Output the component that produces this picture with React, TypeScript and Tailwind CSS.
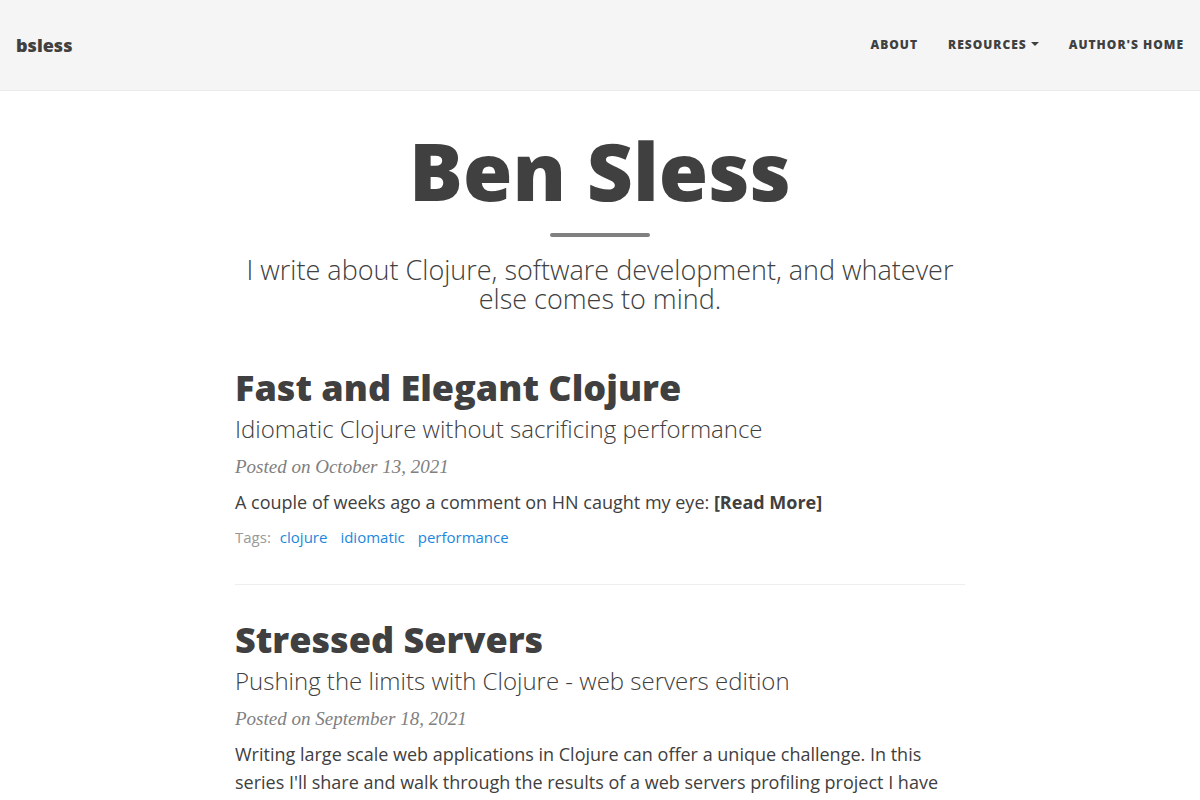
import React from "react";

const sans = "font-['Open_Sans',sans-serif]";

function Post({
  title,
  subtitle,
  date,
  children,
  tags,
}: {
  title: string;
  subtitle: string;
  date: string;
  children: React.ReactNode;
  tags?: string[];
}) {
  return (
    <article className={`border-b border-[#eeeeee] pt-[22px] ${tags ? "pb-[36px]" : "pb-[33px]"}`}>
      <h2 className={`${sans} text-[36px] font-extrabold leading-[1.1] text-[#404040] mt-[13px] mb-[8px]`}>{title}</h2>
      <h3 className={`${sans} text-[24px] font-light leading-[1.1] text-[#404040] mb-[11px]`}>{subtitle}</h3>
      <p className="font-['Liberation_Serif',serif] italic text-[19px] text-[#808080] mb-[7px]">Posted on {date}</p>
      <div className={`${sans} text-[18px] leading-[1.55] text-[#404040]`}>{children}</div>
      {tags && (
        <div className={`${sans} text-[15px] mt-[9px] flex items-baseline`}>
          <span className="text-[#999999] mr-[9px]">Tags:</span>
          <div className="flex gap-[13px]">
            {tags.map((t) => (
              <span key={t} className="text-[#1d87dc]">{t}</span>
            ))}
          </div>
        </div>
      )}
    </article>
  );
}

export default function App() {
  return (
    <div className={`${sans} bg-white min-h-screen`}>
      <nav className="h-[91px] bg-[#f5f5f5] border-b border-[#eaeaea] flex items-center justify-between pl-[16px] pr-[1px]">
        <span className="text-[18px] font-extrabold text-[#404040] mt-[1px]">bsless</span>
        <ul className="flex items-center text-[12px] font-extrabold tracking-[1px] text-[#404040] uppercase">
          <li className="px-[15px] ml-[1px]">About</li>
          <li className="px-[15px] flex items-center gap-[4px]">
            Resources
            <span className="inline-block w-0 h-0 border-l-[4px] border-r-[4px] border-t-[4px] border-l-transparent border-r-transparent border-t-[#404040] mb-[2px]"></span>
          </li>
          <li className="px-[15px]">Author's Home</li>
        </ul>
      </nav>

      <header className="flex flex-col items-center text-center text-[#404040] pt-[35px]">
        <h1 className="text-[80px] font-extrabold leading-[1.1]">Ben Sless</h1>
        <div className="w-[100px] h-[4px] rounded bg-[#808080] mt-[19px] mb-[18px]"></div>
        <p className="text-[27px] font-light leading-[1.08] w-[730px]">
          I write about Clojure, software development, and whatever else comes to mind.
        </p>
      </header>

      <main className="w-[730px] mx-auto mt-[20px]">
        <Post
          title="Fast and Elegant Clojure"
          subtitle="Idiomatic Clojure without sacrificing performance"
          date="October 13, 2021"
          tags={["clojure", "idiomatic", "performance"]}
        >
          A couple of weeks ago a comment on HN caught my eye: <b className="font-bold">[Read More]</b>
        </Post>
        <Post
          title="Stressed Servers"
          subtitle="Pushing the limits with Clojure - web servers edition"
          date="September 18, 2021"
        >
          Writing large scale web applications in Clojure can offer a unique challenge. In this series I'll share and walk through the results of a web servers profiling project I have
        </Post>
      </main>
    </div>
  );
}
